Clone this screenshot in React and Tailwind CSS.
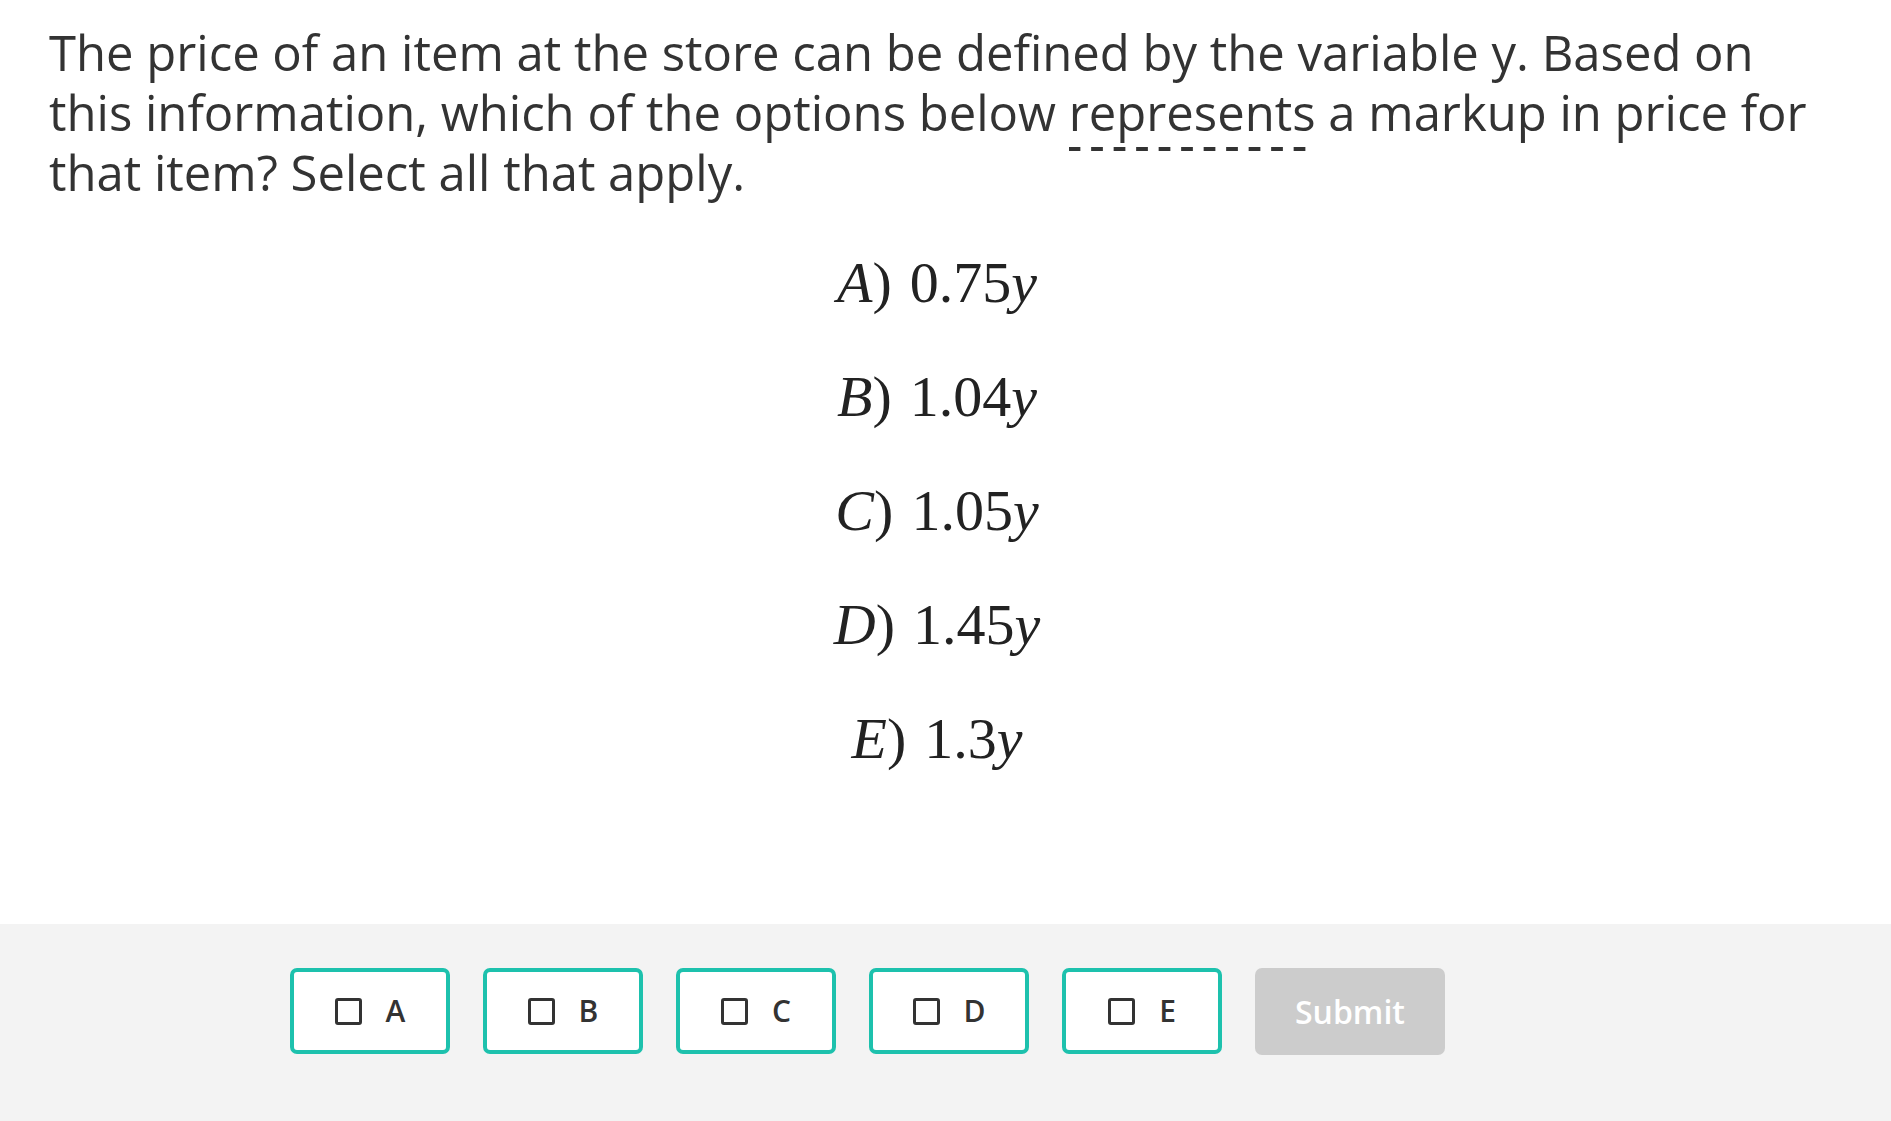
import React from "react";

const options = [
  { letter: "A", value: "0.75" },
  { letter: "B", value: "1.04" },
  { letter: "C", value: "1.05" },
  { letter: "D", value: "1.45" },
  { letter: "E", value: "1.3" },
];

function ChoiceButton({ letter }) {
  return (
    <button className="w-[160px] h-[86px] shrink-0 flex items-center justify-center gap-[24px] bg-white border-[4px] border-[#1dc1ad] rounded-[7px]">
      <span className="w-[27px] h-[27px] border-[3px] border-[#333] rounded-[3px]" />
      <span className="text-[30px] font-semibold text-[#333] leading-none">{letter}</span>
    </button>
  );
}

export default function App() {
  return (
    <div className="w-full min-h-screen bg-white font-['Open_Sans',sans-serif] text-[#333]">
      <div className="pl-[49px] pr-[66px] pt-[22px] pb-[128px]">
        <p className="text-[49px] leading-[60px]">
          The price of an item at the store can be defined by the variable y. Based on this information, which of the
          options below{" "}
          <span className="pb-[6px] bg-[linear-gradient(to_right,#333_52%,transparent_52%)] bg-[length:22.5px_4px] bg-repeat-x bg-bottom">
            represents
          </span>{" "}
          a markup in price for that item? Select all that apply.
        </p>

        <div className="mt-[24px] flex flex-col items-center font-['Liberation_Serif',serif] text-[58px] leading-[114px] text-[#222]">
          {options.map((o) => (
            <div key={o.letter} className="whitespace-nowrap">
              <i>{o.letter}</i>
              <span className="mr-[18px]">)</span>
              <span>{o.value}</span>
              <i>y</i>
            </div>
          ))}
        </div>
      </div>

      <div className="h-[199px] bg-[#f3f3f3] pt-[44px] pl-[290px] flex items-start gap-[33px]">
        {options.map((o) => (
          <ChoiceButton key={o.letter} letter={o.letter} />
        ))}
        <button className="w-[190px] h-[87px] shrink-0 bg-[#cccccc] rounded-[7px] text-white text-[32px] font-semibold">
          Submit
        </button>
      </div>
    </div>
  );
}
